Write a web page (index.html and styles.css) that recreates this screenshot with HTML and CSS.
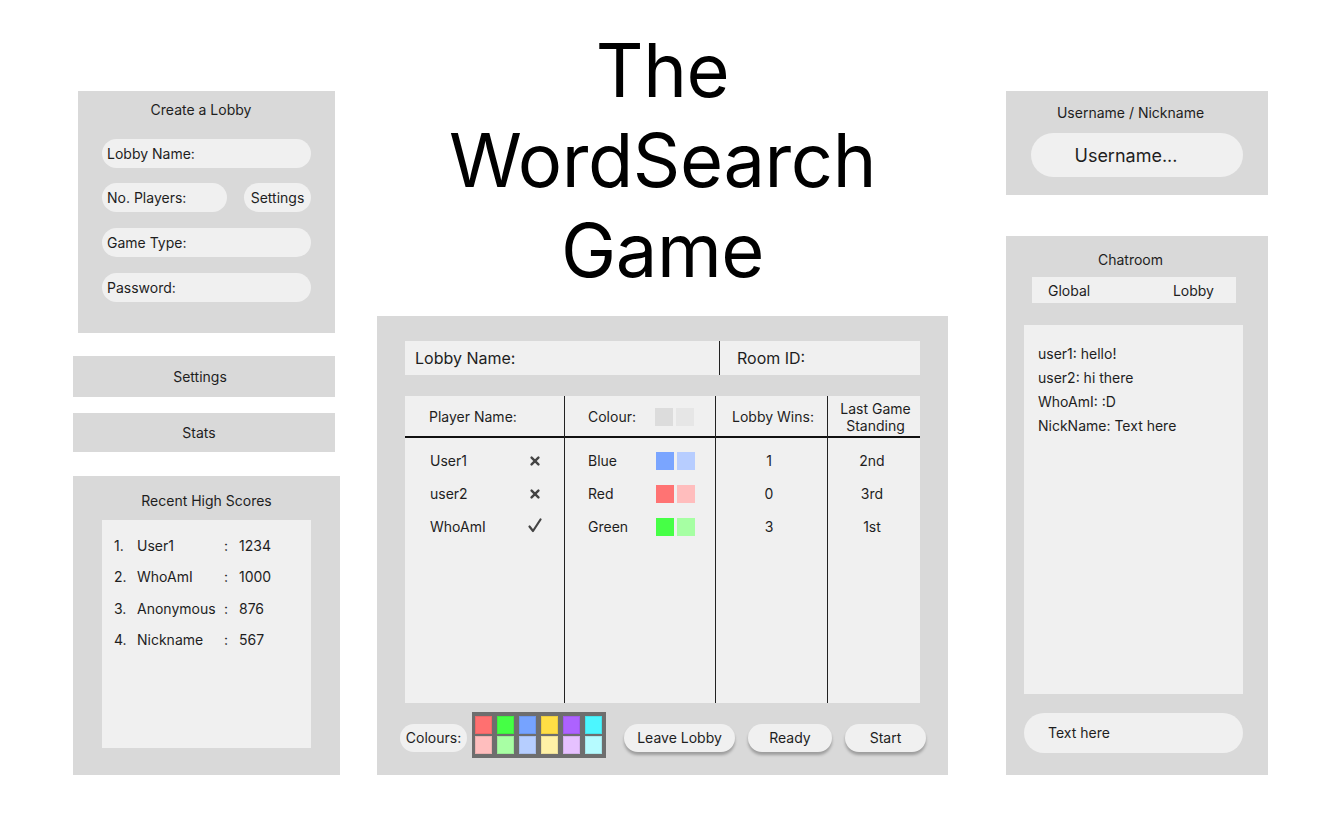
FILE: index.html
```html
<!DOCTYPE html>
<html>
<head>
<meta charset="utf-8">
<link rel="stylesheet" href="styles.css">
</head>
<body>
<div class="page">
  <div class="col-left">
    <section class="panel create">
      <div class="panel-title">Create a Lobby</div>
      <div class="field full first">Lobby Name:</div>
      <div class="field-row">
        <div class="field players">No. Players:</div>
        <div class="field small">Settings</div>
      </div>
      <div class="field full">Game Type:</div>
      <div class="field full">Password:</div>
    </section>
    <div class="bar settings">Settings</div>
    <div class="bar stats">Stats</div>
    <section class="panel scores">
      <div class="panel-title">Recent High Scores</div>
      <div class="score-box">
        <div class="score-row"><span class="sn">1.</span><span class="sname">User1</span><span class="sc">:</span><span>1234</span></div>
        <div class="score-row"><span class="sn">2.</span><span class="sname">WhoAmI</span><span class="sc">:</span><span>1000</span></div>
        <div class="score-row"><span class="sn">3.</span><span class="sname">Anonymous</span><span class="sc">:</span><span>876</span></div>
        <div class="score-row"><span class="sn">4.</span><span class="sname">Nickname</span><span class="sc">:</span><span>567</span></div>
      </div>
    </section>
  </div>

  <div class="col-center">
    <h1 class="title">The<br>WordSearch<br>Game</h1>
    <section class="panel lobby">
      <div class="lobby-head">
        <div class="lh-name">Lobby Name:</div>
        <div class="lh-room">Room ID:</div>
      </div>
      <div class="table">
        <div class="col c1">
          <div class="th th-left">Player Name:</div>
          <div class="rows">
            <div class="row pl"><span>User1</span><svg class="mark" width="10" height="10" viewBox="0 0 10 10"><path d="M1.6 1.6 L8.4 8.4 M8.4 1.6 L1.6 8.4" stroke="#444" stroke-width="2.4" stroke-linecap="round"/></svg></div>
            <div class="row pl"><span>user2</span><svg class="mark" width="10" height="10" viewBox="0 0 10 10"><path d="M1.6 1.6 L8.4 8.4 M8.4 1.6 L1.6 8.4" stroke="#444" stroke-width="2.4" stroke-linecap="round"/></svg></div>
            <div class="row pl"><span>WhoAmI</span><svg class="mark check" width="14" height="15" viewBox="0 0 14 15"><path d="M1.5 8.5 L5 13 L12.5 1.5" stroke="#444" stroke-width="2.2" fill="none" stroke-linecap="round" stroke-linejoin="round"/></svg></div>
          </div>
        </div>
        <div class="col c2">
          <div class="th th-left">Colour:<span class="sw-pair"><i class="sw g1"></i><i class="sw g2"></i></span></div>
          <div class="rows">
            <div class="row cl"><span>Blue</span><span class="sw-pair"><i class="sw b1"></i><i class="sw b2"></i></span></div>
            <div class="row cl"><span>Red</span><span class="sw-pair"><i class="sw r1"></i><i class="sw r2"></i></span></div>
            <div class="row cl"><span>Green</span><span class="sw-pair"><i class="sw gr1"></i><i class="sw gr2"></i></span></div>
          </div>
        </div>
        <div class="col c3">
          <div class="th">Lobby Wins:</div>
          <div class="rows">
            <div class="row ctr">1</div>
            <div class="row ctr">0</div>
            <div class="row ctr">3</div>
          </div>
        </div>
        <div class="col c4">
          <div class="th two">Last Game<br>Standing</div>
          <div class="rows">
            <div class="row ctr">2nd</div>
            <div class="row ctr">3rd</div>
            <div class="row ctr">1st</div>
          </div>
        </div>
      </div>
      <div class="controls">
        <div class="pill label">Colours:</div>
        <div class="palette">
          <i class="p c-red"></i><i class="p c-green"></i><i class="p c-blue"></i><i class="p c-yellow"></i><i class="p c-purple"></i><i class="p c-cyan"></i>
          <i class="p l-red"></i><i class="p l-green"></i><i class="p l-blue"></i><i class="p l-yellow"></i><i class="p l-purple"></i><i class="p l-cyan"></i>
        </div>
        <div class="pill btn leave">Leave Lobby</div>
        <div class="pill btn ready">Ready</div>
        <div class="pill btn start">Start</div>
      </div>
    </section>
  </div>

  <div class="col-right">
    <section class="panel user">
      <div class="panel-title">Username / Nickname</div>
      <div class="user-input">Username...</div>
    </section>
    <section class="panel chat">
      <div class="panel-title">Chatroom</div>
      <div class="tabs"><span>Global</span><span>Lobby</span></div>
      <div class="messages">
        <div class="msg">user1: hello!</div>
        <div class="msg">user2: hi there</div>
        <div class="msg">WhoAmI: :D</div>
        <div class="msg">NickName: Text here</div>
      </div>
      <div class="chat-input">Text here</div>
    </section>
  </div>
</div>
</body>
</html>
```

FILE: styles.css
```css
* { box-sizing: border-box; }
html, body { margin: 0; padding: 0; background: #ffffff; }
body {
  font-family: Inter, "Noto Sans", sans-serif;
  font-size: 14px;
  color: #1e1e1e;
  width: 1339px;
  height: 834px;
  overflow: hidden;
}
.page { display: flex; align-items: flex-start; }

.panel { background: #d9d9d9; }
.panel-title { text-align: center; line-height: 20px; }

/* left column */
.col-left { margin-left: 73px; width: 267px; flex-shrink: 0; display: flex; flex-direction: column; padding-top: 91px; }
.create { margin-left: 5px; width: 257px; height: 242px; padding: 9px 24px 0 24px; }
.create .panel-title { margin-bottom: 19px; padding-right: 11px; }
.field { background: #f0f0f0; height: 29px; line-height: 29px; border-radius: 15px; padding-left: 5px; margin-bottom: 16px; }
.field.first { margin-bottom: 15px; }
.field-row { display: flex; justify-content: space-between; }
.field.players { width: 125px; }
.field.small { width: 67px; padding: 0; text-align: center; }

.bar { background: #d9d9d9; width: 262px; text-align: center; padding-right: 8px; }
.settings { margin-top: 23px; height: 41px; line-height: 41px; }
.stats { margin-top: 16px; height: 39px; line-height: 39px; padding-right: 10px; }

.scores { margin-top: 24px; width: 267px; height: 299px; padding: 15px 29px 27px 29px; display: flex; flex-direction: column; }
.scores .panel-title { margin-bottom: 9px; }
.score-box { background: #f0f0f0; flex: 1; padding: 10px 12px; }
.score-row { display: flex; height: 31.3px; line-height: 31px; }
.sn { width: 23px; }
.sname { width: 87px; }
.sc { width: 15px; }

/* center column */
.col-center { margin-left: 37px; width: 571px; flex-shrink: 0; display: flex; flex-direction: column; }
.title {
  margin: 25px 0 0 0;
  font-weight: 400;
  font-size: 74px;
  line-height: 90px;
  text-align: center;
  color: #000;
  height: 270px;
  letter-spacing: -0.4px;
}
.lobby { margin-top: 21px; height: 459px; padding: 25px 28px 0 28px; }
.lobby-head { display: flex; background: #f0f0f0; height: 34px; line-height: 34px; font-size: 16px; }
.lh-name { width: 315px; padding-left: 10px; border-right: 1.5px solid #222; }
.lh-room { padding-left: 17px; }

.table { margin-top: 21px; height: 307px; background: #f0f0f0; display: flex; }
.col { display: flex; flex-direction: column; }
.c1 { width: 159px; }
.c2 { width: 151px; border-left: 1.5px solid #222; }
.c3 { width: 112px; border-left: 1.5px solid #222; }
.c4 { flex: 1; border-left: 1.5px solid #222; }
.th { height: 42px; border-bottom: 2px solid #111; display: flex; align-items: center; justify-content: center; padding-top: 1px; }
.th-left { justify-content: flex-start; padding-left: 24px; }
.c2 .th { padding-left: 23px; }
.c3 .th { padding-left: 3px; }
.th.two { line-height: 17px; text-align: center; padding-top: 1px; padding-left: 3px; }
.rows { padding-top: 6px; }
.row { height: 33px; display: flex; align-items: center; }
.pl { padding-left: 25px; justify-content: space-between; padding-right: 24px; }
.pl .check { margin-right: -2px; margin-top: -3px; }
.cl { padding-left: 23px; }
.ctr { justify-content: center; }
.c3 .ctr { padding-right: 5px; }
.c4 .ctr { padding-right: 4px; }
.sw-pair { display: flex; gap: 3px; margin-left: auto; margin-right: 20px; }
.th .sw-pair { margin-left: 19px; margin-right: 0; }
.sw { display: block; width: 18px; height: 18px; }
.g1 { background: #dcdcdc; } .g2 { background: #e6e6e6; }
.b1 { background: #7aa5ff; } .b2 { background: #b7cdff; }
.r1 { background: #ff7373; } .r2 { background: #ffbdbd; }
.gr1 { background: #46ff46; } .gr2 { background: #a6ffa3; }

.controls { display: flex; align-items: center; margin-top: 9px; margin-left: -5px; height: 46px; }
.controls > * { flex-shrink: 0; }
.pill { background: #f0f0f0; height: 28px; line-height: 28px; border-radius: 14px; text-align: center; }
.label { width: 67px; margin-top: 6px; }
.palette {
  margin-left: 5px;
  width: 134px; height: 46px;
  background: #6e6e6e;
  padding: 4px 3px;
  display: grid;
  grid-template-columns: repeat(6, 17px);
  grid-template-rows: 18px 18px;
  column-gap: 5px; row-gap: 2px;
}
.p { display: block; box-shadow: inset 0 0 0 1px rgba(0,0,0,0.08); }
.c-red { background: #ff7070; } .c-green { background: #45ff45; } .c-blue { background: #76a3ff; }
.c-yellow { background: #ffde45; } .c-purple { background: #ad62ff; } .c-cyan { background: #4cf6ff; }
.l-red { background: #ffbebe; } .l-green { background: #a8ffa4; } .l-blue { background: #b6ceff; }
.l-yellow { background: #fff1a6; } .l-purple { background: #e6c1ff; } .l-cyan { background: #b6fbff; }
.btn { box-shadow: 0 3px 3px rgba(0,0,0,0.28); margin-top: 6px; }
.leave { margin-left: 18px; width: 111px; }
.ready { margin-left: 13px; width: 84px; }
.start { margin-left: 13px; width: 81px; }

/* right column */
.col-right { margin-left: 58px; width: 262px; flex-shrink: 0; display: flex; flex-direction: column; padding-top: 91px; }
.user { height: 104px; padding: 12px 25px 0 25px; }
.user .panel-title { margin-bottom: 10px; padding-right: 13px; }
.user-input { background: #f0f0f0; height: 44px; line-height: 45px; border-radius: 22px; text-align: center; font-size: 18px; padding-right: 22px; }
.chat { margin-top: 41px; height: 539px; padding: 14px 25px 18px 18px; display: flex; flex-direction: column; }
.chat .panel-title { padding-right: 6px; }
.tabs { margin: 7px 7px 0 8px; height: 26px; background: #f0f0f0; display: flex; justify-content: space-between; align-items: center; padding: 0 22px 0 16px; }
.messages { margin-top: 22px; height: 369px; background: #f0f0f0; padding: 17px 14px; }
.msg { height: 24px; line-height: 24px; }
.chat-input { margin-top: 19px; height: 40px; line-height: 40px; background: #f0f0f0; border-radius: 20px; padding-left: 24px; }
```
